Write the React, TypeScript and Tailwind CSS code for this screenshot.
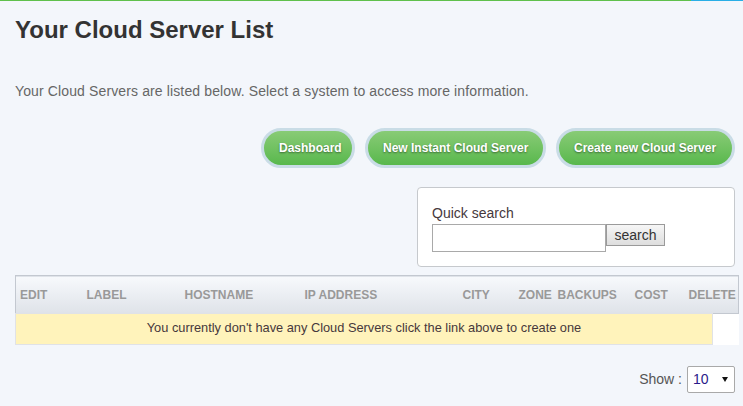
const columns = [
  { label: "EDIT" },
  { label: "LABEL" },
  { label: "HOSTNAME" },
  { label: "IP ADDRESS" },
  { label: "CITY" },
  { label: "ZONE" },
  { label: "BACKUPS" },
  { label: "COST" },
];

const buttons = [
  { label: "Dashboard", w: "w-[94px]" },
  { label: "New Instant Cloud Server", w: "w-[181px]" },
  { label: "Create new Cloud Server", w: "w-[179px]" },
];

const App = () => {
  return (
    <div className="h-[406px] w-[743px] overflow-hidden bg-[#f3f6fb] font-['Liberation_Sans',Arial,sans-serif] text-[#333]">
      <div className="flex h-px">
        <div className="w-[691px] bg-[#5fc04c]" />
        <div className="flex-1 bg-[#29aee6]" />
      </div>

      <div className="pl-[15px] pr-2">
        <h1 className="mt-[15px] text-[24px] leading-[28px] font-bold text-[#333]">Your Cloud Server List</h1>
        <p className="mt-[37px] text-[14px] leading-[20px] tracking-[0.125px] text-[#666]">
          Your Cloud Servers are listed below. Select a system to access more information.
        </p>

        <div className="mt-[27px] flex justify-end gap-[10px]">
          {buttons.map((b) => (
            <a
              key={b.label}
              className={`${b.w} flex h-10 items-center whitespace-nowrap rounded-full border-[3px] border-[#c9dce6] bg-gradient-to-b from-[#88cb76] to-[#58b84c] pl-[15px] text-[12px] font-bold text-white [text-shadow:0_1px_2px_rgba(0,0,0,0.45)]`}
            >
              {b.label}
            </a>
          ))}
        </div>

        <div className="mt-[19px] flex justify-end">
          <div className="h-[80px] w-[318px] rounded-[4px] border border-[#c6c9cd] bg-white pl-[14px] pt-[16px]">
            <div className="mb-[2px] text-[14px] leading-[18px] text-[#46383c]">Quick search</div>
            <div className="flex items-start">
              <input className="h-[28px] w-[174px] border border-[#a9a9a9] bg-white" />
              <button className="h-[22px] w-[59px] border border-[#9a9a9a] bg-gradient-to-b from-[#f6f6f6] to-[#dedede] text-[14px] leading-[18px] text-[#333]">
                search
              </button>
            </div>
          </div>
        </div>

        <table className="mt-2 w-[723px] table-fixed border-collapse">
          <colgroup>
            <col className="w-[67px]" />
            <col className="w-[98px]" />
            <col className="w-[120px]" />
            <col className="w-[158px]" />
            <col className="w-[56px]" />
            <col className="w-[39px]" />
            <col className="w-[77px]" />
            <col className="w-[54px]" />
            <col className="w-[28px]" />
            <col className="w-[26px]" />
          </colgroup>
          <thead>
            <tr className="h-[38px] border border-[#c3c8d0] bg-gradient-to-b from-[#f7f9fc] to-[#dfe3e9]">
              {columns.map((c) => (
                <th key={c.label} className="whitespace-nowrap pl-[4px] text-left text-[12px] font-bold text-[#999]">
                  {c.label}
                </th>
              ))}
              <th colSpan={2} className="whitespace-nowrap pl-[4px] text-left text-[12px] font-bold text-[#999]">
                DELETE
              </th>
            </tr>
          </thead>
          <tbody>
            <tr className="h-[31px]">
              <td
                colSpan={9}
                className="border border-[#e0e2e6] bg-[#fff3bb] pb-[2px] text-center text-[12.8px] text-[#46383c]"
              >
                You currently don't have any Cloud Servers click the link above to create one
              </td>
              <td className="bg-white" />
            </tr>
          </tbody>
        </table>

        <div className="mt-[21px] flex items-center justify-end gap-[5px]">
          <span className="text-[14px] text-[#555]">Show :</span>
          <div className="flex h-[27px] w-[48px] items-center justify-between rounded-[2px] border border-[#a9a9a9] bg-white pl-[5px] pr-[6px] text-[14px] text-[#2a1a8a]">
            <span>10</span>
            <svg width="6" height="5" viewBox="0 0 6 5">
              <polygon points="0,0 6,0 3,5" fill="#111" />
            </svg>
          </div>
        </div>
      </div>
    </div>
  );
};

export default App;
